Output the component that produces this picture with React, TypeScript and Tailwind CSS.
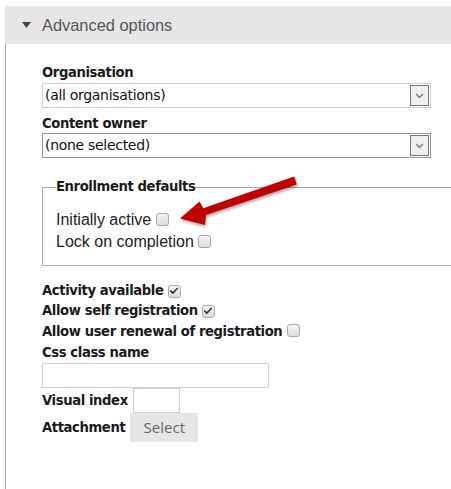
import { Check } from 'lucide-react'

function Box({ checked }: { checked?: boolean }) {
  return (
    <span className="inline-flex h-[13px] w-[13px] items-center justify-center rounded-[3px] border border-[#a9a9a9] bg-gradient-to-b from-[#f4f4f4] to-[#dcdcdc] align-[-1px]">
      {checked && <Check className="h-[10px] w-[10px] text-[#333]" strokeWidth={4} />}
    </span>
  )
}

function Dropdown({ value, border }: { value: string; border: string }) {
  return (
    <div className={`flex h-[25px] w-[389px] items-center justify-between border ${border} bg-white pl-[2px] pr-[1px]`}>
      <span className="font-['DejaVu_Sans',sans-serif] text-[14px] tracking-[-0.3px] text-[#111]">{value}</span>
      <span className="flex h-[21px] w-[19px] items-center justify-center border border-[#777] bg-[#efefef]">
        <svg width="9" height="6" viewBox="0 0 9 6">
          <path d="M1 1l3.5 3.5L8 1" fill="none" stroke="#777" strokeWidth="1.3" />
        </svg>
      </span>
    </div>
  )
}

export default function App() {
  const bold = "font-['DejaVu_Sans',sans-serif] font-bold text-[13.2px] tracking-[-0.4px] text-[#1a1a1a]"
  return (
    <div className="relative h-[489px] w-[451px] overflow-hidden bg-white font-['Liberation_Sans',Arial,sans-serif]">
      <div className="pt-[6px] pl-[5px]">
        <div className="flex h-[38px] items-center bg-[#e6e6e6] pl-[17px]">
          <svg width="9" height="6" viewBox="0 0 9 6" className="mr-[11px]">
            <path d="M0 0h9L4.5 6z" fill="#444" />
          </svg>
          <span className="text-[16.4px] text-[#555]">Advanced options</span>
        </div>
        <div className="h-[445px] border-l border-[#aaa] pl-[36px] pt-[21px]">
          <div className={`${bold} leading-[16px]`}>Organisation</div>
          <div className="mt-[2px]">
            <Dropdown value="(all organisations)" border="border-[#c5d3e0]" />
          </div>
          <div className={`${bold} mt-[8px] leading-[16px]`}>Content owner</div>
          <div className="mt-[1px]">
            <Dropdown value="(none selected)" border="border-[#999]" />
          </div>

          <fieldset className="mt-[21px] mr-[-40px] border border-[#aaa] pb-[12px] pl-[13px]">
            <legend className={`${bold} px-0 leading-[16px]`}>Enrollment defaults</legend>
            <div className="mt-[14px] text-[16px] leading-[22px] text-[#222]">
              Initially active <Box />
            </div>
            <div className="text-[16px] leading-[22px] text-[#222]">
              Lock on completion <Box />
            </div>
          </fieldset>

          <div className="mt-[15px] flex flex-col">
            <div className={`${bold} leading-[20px]`}>
              Activity available <Box checked />
            </div>
            <div className={`${bold} leading-[20px]`}>
              Allow self registration <Box checked />
            </div>
            <div className={`${bold} leading-[21px]`}>
              Allow user renewal of registration <Box />
            </div>
            <div className={`${bold} leading-[21px]`}>Css class name</div>
            <div className="h-[25px] w-[227px] border border-[#c5d3e0] bg-white" />
            <div className="flex h-[25px] items-center">
              <span className={bold}>Visual index</span>
              <span className="ml-[5px] h-[25px] w-[47px] border border-[#c5d3e0] bg-white" />
            </div>
            <div className="flex items-center">
              <span className={bold}>Attachment</span>
              <button className="ml-[5px] h-[29px] w-[68px] bg-[#e6e6e6] font-['Open_Sans',sans-serif] text-[15px] text-[#666]">
                Select
              </button>
            </div>
          </div>
        </div>
      </div>

      <svg className="pointer-events-none absolute left-0 top-0" width="451" height="489" viewBox="0 0 451 489">
        <defs>
          <filter id="sh" x="-20%" y="-40%" width="140%" height="180%">
            <feDropShadow dx="1" dy="2" stdDeviation="1.5" floodColor="#000" floodOpacity="0.35" />
          </filter>
        </defs>
        <path
          filter="url(#sh)"
          d="M180 218.5 L205 225 L206 215 L296.8 184.6 L294.2 176.6 L203.3 208.2 L199.5 201.5 Z"
          fill="#c00000"
        />
      </svg>
    </div>
  )
}
